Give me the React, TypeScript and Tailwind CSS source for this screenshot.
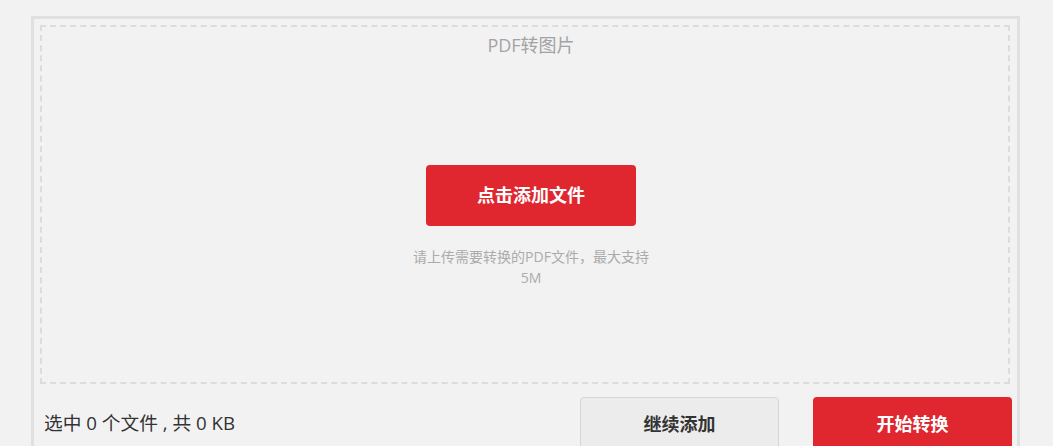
export default function App() {
  const font = { fontFamily: '"Open Sans", "Noto Sans CJK SC", sans-serif' };
  return (
    <div className="min-h-[446px] w-[1053px] overflow-hidden bg-[#f2f2f2] pt-4" style={font}>
      <div className="ml-[31px] w-[989px] border-[3px] border-b-0 border-[#e0e0e0] px-[6px] pt-[6px] pr-[7px]">
        <div className="flex h-[359px] flex-col items-center border-2 border-dashed border-[#dcdcdc] pl-3">
          <h2 className="mt-[6px] text-[18px] leading-6 text-[#a3a3a3]">PDF转图片</h2>
          <button className="mt-[108px] h-[61px] w-[210px] rounded-[4px] bg-[#e0262f] text-[18px] font-bold text-white">
            点击添加文件
          </button>
          <p className="mt-[20px] w-[242px] text-center text-[14px] leading-[21px] text-[#ababab]">
            请上传需要转换的PDF文件，最大支持5M
          </p>
        </div>
        <div className="mt-[13px] flex items-start">
          <span className="mt-[14px] ml-[4px] text-[18.7px] leading-6 text-[#333]">选中 0 个文件 , 共 0 KB</span>
          <div className="-mr-[2px] ml-auto flex gap-[34px]">
            <button className="h-[54px] w-[199px] rounded-[4px] border border-[#d6d6d6] bg-[#ececec] text-[18px] font-bold text-[#333]">
              继续添加
            </button>
            <button className="h-[54px] w-[199px] rounded-[4px] bg-[#e0262f] text-[18px] font-bold text-white">
              开始转换
            </button>
          </div>
        </div>
      </div>
    </div>
  );
}
